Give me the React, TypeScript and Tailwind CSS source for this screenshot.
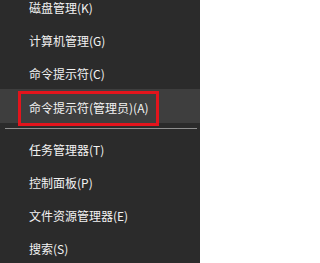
const topItems = [
  "磁盘管理(K)",
  "计算机管理(G)",
  "命令提示符(C)",
];

const bottomItems = [
  "任务管理器(T)",
  "控制面板(P)",
  "文件资源管理器(E)",
  "搜索(S)",
];

const font = { fontFamily: '"Noto Sans CJK SC", "Noto Sans", sans-serif' };

const MenuRow = ({ label }: { label: string }) => (
  <div className="h-[33px] flex items-center pl-[29px] pt-[3px] text-[12px] text-[#f2f2f2] whitespace-nowrap">
    {label}
  </div>
);

export default function App() {
  return (
    <div
      className="w-[200px] h-[263px] bg-[#2b2b2b] overflow-hidden"
      style={font}
    >
      <div className="-mt-[10px] flex flex-col">
        {topItems.map((label) => (
          <MenuRow key={label} label={label} />
        ))}

        {/* hovered row with red annotation box */}
        <div className="relative h-[34px] bg-[#3e3e3e] flex items-center pl-[29px] pt-[3px] text-[12px] text-[#f2f2f2] whitespace-nowrap">
          命令提示符(管理员)(A)
          <div className="absolute top-[2px] left-[18px] w-[141px] h-[35px] border-[3px] border-[#e3141c]" />
        </div>

        {/* separator */}
        <div className="pt-[5px] pb-[3px] pl-[5px] pr-[3px]">
          <div className="h-px bg-[#8f8f8f]" />
        </div>

        {bottomItems.map((label) => (
          <MenuRow key={label} label={label} />
        ))}
      </div>
    </div>
  );
}
